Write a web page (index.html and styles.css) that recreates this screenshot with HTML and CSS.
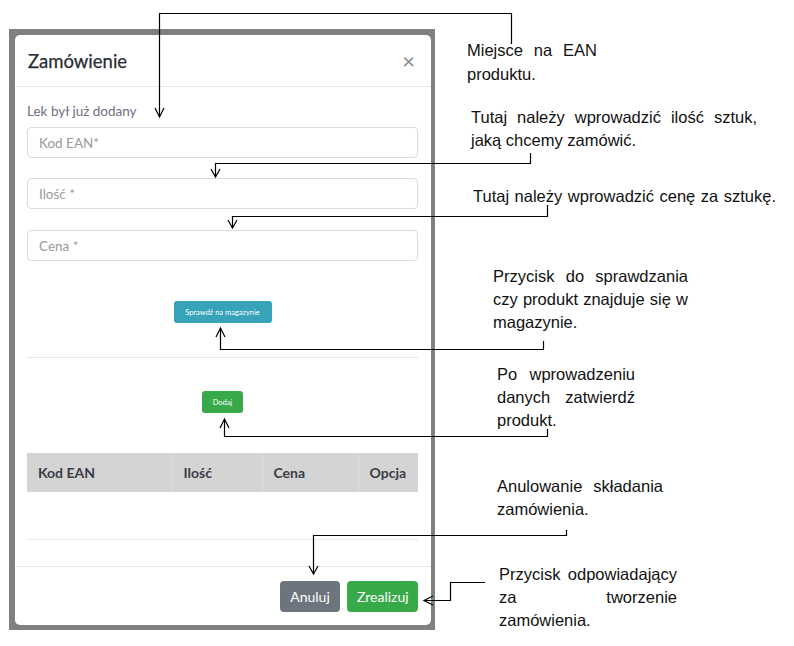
FILE: index.html
```html
<!DOCTYPE html>
<html lang="pl">
<head>
    <meta charset="UTF-8" />
    <title>Zamówienie - instrukcja</title>
    <link rel="stylesheet" href="styles.css">
</head>
<body>
    <div class="stage">
        <div class="backdrop">
            <div class="modal">
                <div class="modal-header">
                    <h5>Zamówienie</h5>
                    <span class="close">&times;</span>
                </div>
                <div class="modal-body">
                    <p class="note">Lek był już dodany</p>
                    <input class="field first" type="text" placeholder="Kod EAN*" />
                    <input class="field second" type="text" placeholder="Ilość *" />
                    <input class="field third" type="text" placeholder="Cena *" />
                    <div class="center check"><button class="btn btn-info">Sprawdź na magazynie</button></div>
                    <hr class="line-a" />
                    <div class="center"><button class="btn btn-success">Dodaj</button></div>
                    <table class="items">
                        <colgroup>
                            <col class="c-ean" />
                            <col class="c-qty" />
                            <col class="c-price" />
                            <col />
                        </colgroup>
                        <thead>
                            <tr>
                                <th>Kod EAN</th>
                                <th>Ilość</th>
                                <th>Cena</th>
                                <th>Opcja</th>
                            </tr>
                        </thead>
                    </table>
                    <hr class="line-b" />
                </div>
                <div class="modal-footer">
                    <button class="btn-lg btn-secondary">Anuluj</button>
                    <button class="btn-lg btn-green">Zrealizuj</button>
                </div>
            </div>
        </div>

        <!-- strzałki z opisami -->
        <svg class="arrows" width="794" height="646" viewBox="0 0 794 646">
            <g fill="none" stroke="#000" stroke-width="1.2">
                <path d="M511.5 44 V13.5 H159.5 V117" />
                <polyline points="155,108 159.5,117 164,108" />

                <path d="M530.5 153 V163.5 H215.5 V177" />
                <polyline points="211,169 215.5,177 220,169" />

                <path d="M547.5 205 V216.5 H232.5 V228" />
                <polyline points="228,220 232.5,228 237,220" />

                <path d="M543.5 341 V349.5 H220.5 V328" />
                <polyline points="216,337 220.5,328 225,337" />

                <path d="M547.5 429 V436.5 H224.5 V419" />
                <polyline points="220,428 224.5,419 229,428" />

                <path d="M566.5 530 V535.5 H313.5 V574" />
                <polyline points="309,566 313.5,574 318,566" />

                <path d="M485 582.5 H450.5 V600.5 H424" />
                <polyline points="433,596 424,600.5 433,605" />
            </g>
        </svg>

        <div class="tip tip-ean">
            <div class="j">Miejsce na EAN</div>
            <div>produktu.</div>
        </div>
        <div class="tip tip-qty">
            <div class="j">Tutaj należy wprowadzić ilość sztuk,</div>
            <div>jaką chcemy zamówić.</div>
        </div>
        <div class="tip tip-price">
            <div class="j">Tutaj należy wprowadzić cenę za sztukę.</div>
        </div>
        <div class="tip tip-check">
            <div class="j">Przycisk do sprawdzania</div>
            <div class="j">czy produkt znajduje się w</div>
            <div>magazynie.</div>
        </div>
        <div class="tip tip-add">
            <div class="j">Po wprowadzeniu</div>
            <div class="j">danych zatwierdź</div>
            <div>produkt.</div>
        </div>
        <div class="tip tip-cancel">
            <div class="j">Anulowanie składania</div>
            <div>zamówienia.</div>
        </div>
        <div class="tip tip-submit">
            <div class="j">Przycisk odpowiadający</div>
            <div class="j">za tworzenie</div>
            <div>zamówienia.</div>
        </div>
    </div>
</body>
</html>
```

FILE: styles.css
```css
:root {
    --frame: #808080;
    --line: #e3e6f0;
    --text: #3a3b45;
    --muted: #6e707e;
    --info: #36a3b9;
    --green: #38a948;
    --grey-btn: #6c757d;
}

body {
    margin: 0;
    padding: 0;
    background: #fff;
    font-family: Lato, "Open Sans", sans-serif;
    color: var(--text);
}

.stage {
    position: relative;
    width: 794px;
    height: 646px;
    padding: 29px 0 0 9px;
    box-sizing: border-box;
}

.backdrop {
    width: 426px;
    padding: 6px 4px 5px 6px;
    background: var(--frame);
    box-sizing: border-box;
}

.modal {
    background: #fff;
    border-radius: 5px;
    overflow: hidden;
}

.modal-header {
    height: 51px;
    display: flex;
    align-items: center;
    justify-content: space-between;
    padding: 0 16px 0 13px;
    border-bottom: 1px solid var(--line);
}

.modal-header h5 {
    margin: 0;
    font-size: 18.5px;
    font-weight: 400;
    color: #2b2c33;
    -webkit-text-stroke: 0.25px #2b2c33;
}

.close {
    font-size: 22px;
    color: #8a8a8a;
    line-height: 1;
}

.modal-body {
    padding: 14px 13px 26px 12px;
}

.note {
    margin: 0;
    line-height: 20px;
    font-size: 13.5px;
    color: var(--muted);
}

.field {
    display: block;
    width: 100%;
    height: 31px;
    box-sizing: border-box;
    border: 1px solid #d9dbe4;
    border-radius: 4px;
    padding: 0 11px;
    font-family: inherit;
    font-size: 13.5px;
    color: var(--text);
}

.field::placeholder {
    color: #9a9a9a;
}

.first { margin-top: 6px; }
.second { margin-top: 20px; }
.third { margin-top: 21px; }

.center {
    display: flex;
    justify-content: center;
}

.check {
    margin-top: 40px;
}

.btn {
    height: 22px;
    border: none;
    border-radius: 3px;
    color: #fff;
    font-family: inherit;
    font-size: 7.5px;
    padding: 0;
    white-space: nowrap;
}

.btn-info {
    width: 98px;
    background: var(--info);
}

.btn-success {
    width: 41px;
    background: var(--green);
}

hr {
    border: 0;
    border-top: 1px solid var(--line);
    margin: 0;
}

.line-a {
    margin: 34px 0 33px;
}

.line-b {
    margin-top: 47px;
}

.items {
    width: 100%;
    margin-top: 40px;
    border-collapse: collapse;
    table-layout: fixed;
}

.c-ean { width: 145px; }
.c-qty { width: 90px; }
.c-price { width: 96px; }

.items th {
    height: 39px;
    padding: 0 11px;
    background: #d4d4d4;
    text-align: left;
    font-size: 14px;
    font-weight: 700;
    color: var(--text);
    border-left: 1px solid #dedede;
}

.items th:first-child {
    border-left: none;
}

.modal-footer {
    display: flex;
    justify-content: flex-end;
    gap: 7px;
    padding: 14px 13px 13px;
    border-top: 1px solid var(--line);
}

.btn-lg {
    height: 31px;
    border: none;
    border-radius: 4px;
    color: #fff;
    font-family: inherit;
    font-size: 14px;
    padding: 0 10px;
}

.btn-secondary {
    width: 60px;
    background: var(--grey-btn);
}

.btn-green {
    width: 71px;
    background: var(--green);
}

.arrows {
    position: absolute;
    left: 0;
    top: 0;
    pointer-events: none;
}

.tip {
    position: absolute;
    font-family: "Liberation Sans", Arial, sans-serif;
    font-size: 16.5px;
    line-height: 23px;
    color: #111;
}

.tip .j {
    text-align: justify;
    text-align-last: justify;
}

.tip-ean { left: 467px; top: 38px; width: 130px; line-height: 24px; }
.tip-qty { left: 471px; top: 106px; width: 286px; }
.tip-price { left: 473px; top: 185px; width: 303px; }
.tip-check { left: 493px; top: 265px; width: 195px; }
.tip-add { left: 497px; top: 363px; width: 138px; }
.tip-cancel { left: 497px; top: 475px; width: 166px; }
.tip-submit { left: 499px; top: 563px; width: 178px; }
```
